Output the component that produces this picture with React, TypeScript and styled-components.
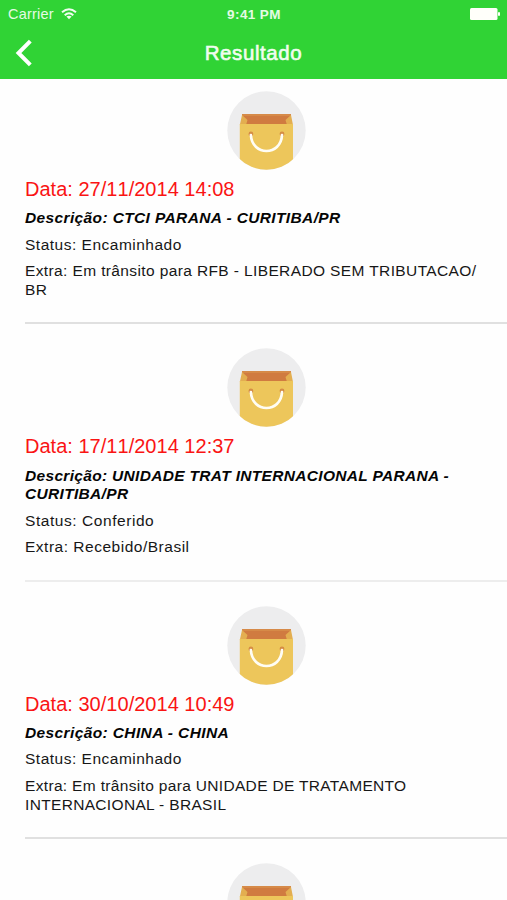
import React from "react";
import styled, { createGlobalStyle } from "styled-components";

const GlobalStyle = createGlobalStyle`
  * { box-sizing: border-box; }
  html, body { margin: 0; padding: 0; background: #fff; overflow: hidden; }
  body { font-family: "Liberation Sans", Arial, sans-serif; font-kerning: none; }
`;

const Screen = styled.div`
  width: 507px;
  height: 900px;
  overflow: hidden;
  background: #fefefe;
`;

const Header = styled.header`
  height: 79px;
  background: #30d335;
  color: #fff;
`;

const StatusBar = styled.div`
  height: 28px;
  display: grid;
  grid-template-columns: 1fr auto 1fr;
  align-items: center;
  padding: 0 7px 0 8px;
`;

const Carrier = styled.div`
  display: flex;
  align-items: center;
  gap: 7px;
  font-size: 14.5px;
  letter-spacing: 0.2px;
  color: #e4fbe4;
`;

const Clock = styled.div`
  font-size: 13.5px;
  font-weight: 700;
  letter-spacing: 0.4px;
  color: #e4fbe4;
`;

const BatterySlot = styled.div`
  display: flex;
  justify-content: flex-end;
`;

const NavBar = styled.nav`
  height: 50px;
  display: grid;
  grid-template-columns: 60px 1fr 60px;
  align-items: center;
`;

const BackButton = styled.button`
  display: flex;
  padding: 0 0 0 14px;
  border: 0;
  background: none;
`;

const Title = styled.h1`
  margin: -1px 0 0;
  text-align: center;
  font-size: 20.5px;
  font-weight: 400;
  letter-spacing: 0.6px;
  -webkit-text-stroke: 0.6px #f0fdf0;
  color: #f0fdf0;
`;

const EventList = styled.ul`
  margin: 0;
  padding: 12px 0 0;
  list-style: none;
  display: flex;
  flex-direction: column;
  gap: 24px;
`;

const Entry = styled.li`
  height: 233.4px;
  flex: none;
  display: flex;
  flex-direction: column;
`;

const Picture = styled.div`
  height: 79px;
  display: flex;
  justify-content: center;
  padding-left: 25px;
`;

const Details = styled.div`
  flex: 1;
  margin-left: 25px;
  padding-top: 7px;
`;

const Line = styled.p<{ $tracking: number }>`
  margin: 0 0 8px;
  font-size: 15.5px;
  line-height: 18.7px;
  letter-spacing: ${(p) => p.$tracking}px;
  font-kerning: normal;
  white-space: pre;
  color: #171717;
`;

const DateLine = styled(Line)`
  margin-bottom: 8.2px;
  font-size: 20px;
  line-height: 24px;
  font-kerning: none;
  color: #fa1414;
`;

const Description = styled(Line)`
  margin-bottom: 7.8px;
  font-weight: 700;
  font-style: italic;
  color: #050505;
`;

const Divider = styled.div<{ $faint: boolean }>`
  height: ${(p) => (p.$faint ? 1.5 : 2)}px;
  margin-left: 25px;
  background: ${(p) => (p.$faint ? "#ededed" : "#e0e0e0")};
`;

function Wifi() {
  return (
    <svg width="16" height="12" viewBox="0 0 16 12" fill="none" stroke="#f0fdf0" strokeWidth="2">
      <path d="M1 4.2 Q8 -1.8 15 4.2" />
      <path d="M3.7 7.2 Q8 3.4 12.3 7.2" />
      <path d="M8 11.2 L5.4 8.6 Q8 6.8 10.6 8.6 Z" fill="#f0fdf0" stroke="none" />
    </svg>
  );
}

function Battery() {
  return (
    <svg width="30" height="12" viewBox="0 0 30 12" fill="#fffffa">
      <rect x="0" y="0" width="27.5" height="12" rx="1.5" />
      <rect x="28" y="4" width="2" height="4" rx="1" />
    </svg>
  );
}

function Chevron() {
  return (
    <svg width="20" height="28" viewBox="0 0 20 28" fill="none" stroke="#fff" strokeWidth="4">
      <path d="M16.3 2.2 L4.5 14 L16.3 25.8" />
    </svg>
  );
}

function Bag({ id }: { id: string }) {
  return (
    <svg width="79" height="79" viewBox="0 0 79 79">
      <clipPath id={id}>
        <circle cx="39.5" cy="39.5" r="39.2" />
      </clipPath>
      <g clipPath={`url(#${id})`}>
        <rect width="79" height="79" fill="#ededee" />
        <path d="M15 23 H64 V34 H15 Z" fill="#d07b40" />
        <path d="M15 23 H64 V25 H15 Z" fill="#d68a48" />
        <path d="M15 24 L20.5 29 L19 34 H12.8 Z M64 24 L58.5 29 L60 34 H66 Z" fill="#e3ae50" />
        <path d="M12.8 33 H66 V79 H12.8 Z" fill="#edc65b" />
        <circle cx="23.9" cy="43" r="2.4" fill="#d58d45" />
        <circle cx="55" cy="43" r="2.4" fill="#d58d45" />
        <path d="M23.9 44 C25 65.3 54 65.3 55 44" fill="none" stroke="#fffdf4" strokeWidth="2.7" strokeLinecap="round" />
      </g>
    </svg>
  );
}

type Text = { text: string; tracking: number };
type TrackingEvent = { date: Text; description: Text; status: Text; extra: Text };

const events: TrackingEvent[] = [
  {
    date: { text: "Data: 27/11/2014 14:08", tracking: 0.02 },
    description: { text: "Descrição: CTCI PARANA - CURITIBA/PR", tracking: 0.37 },
    status: { text: "Status: Encaminhado", tracking: 0.5 },
    extra: { text: "Extra: Em trânsito para RFB - LIBERADO SEM TRIBUTACAO/\nBR", tracking: 0.38 },
  },
  {
    date: { text: "Data: 17/11/2014 12:37", tracking: 0.02 },
    description: { text: "Descrição: UNIDADE TRAT INTERNACIONAL PARANA -\nCURITIBA/PR", tracking: 0.32 },
    status: { text: "Status: Conferido", tracking: 0.56 },
    extra: { text: "Extra: Recebido/Brasil", tracking: 0.51 },
  },
  {
    date: { text: "Data: 30/10/2014 10:49", tracking: 0.02 },
    description: { text: "Descrição: CHINA - CHINA", tracking: 0.38 },
    status: { text: "Status: Encaminhado", tracking: 0.5 },
    extra: { text: "Extra: Em trânsito para UNIDADE DE TRATAMENTO\nINTERNACIONAL - BRASIL", tracking: 0.33 },
  },
];

export default function App() {
  return (
    <Screen>
      <GlobalStyle />
      <Header>
        <StatusBar>
          <Carrier>
            Carrier
            <Wifi />
          </Carrier>
          <Clock>9:41 PM</Clock>
          <BatterySlot>
            <Battery />
          </BatterySlot>
        </StatusBar>
        <NavBar>
          <BackButton aria-label="Voltar">
            <Chevron />
          </BackButton>
          <Title>Resultado</Title>
        </NavBar>
      </Header>
      <EventList>
        {events.map((event, i) => (
          <Entry key={i}>
            <Picture>
              <Bag id={`bag-${i}`} />
            </Picture>
            <Details>
              <DateLine $tracking={event.date.tracking}>{event.date.text}</DateLine>
              <Description $tracking={event.description.tracking}>{event.description.text}</Description>
              <Line $tracking={event.status.tracking}>{event.status.text}</Line>
              <Line $tracking={event.extra.tracking}>{event.extra.text}</Line>
            </Details>
            <Divider $faint={i === 1} />
          </Entry>
        ))}
        <Entry>
          <Picture>
            <Bag id="bag-next" />
          </Picture>
        </Entry>
      </EventList>
    </Screen>
  );
}
